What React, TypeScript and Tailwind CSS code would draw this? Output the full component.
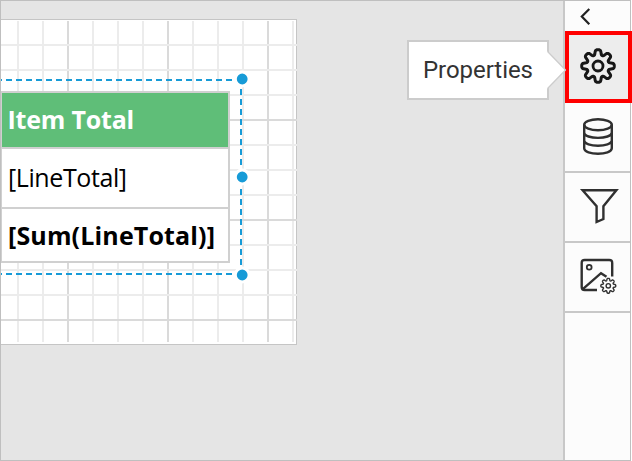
import type { ReactNode } from "react";

function gearPath(c: number, teeth: number, base: number, depth: number, sharp: number) {
  const points: string[] = [];
  const steps = teeth * 24;
  for (let i = 0; i < steps; i++) {
    const a = (i / steps) * Math.PI * 2;
    const wave = Math.tanh(sharp * (Math.cos(teeth * a) + 0.22));
    const r = base + depth * wave;
    points.push(`${(c + r * Math.sin(a)).toFixed(2)} ${(c - r * Math.cos(a)).toFixed(2)}`);
  }
  return `M${points.join("L")}Z`;
}

const verticals = Array.from({ length: 12 }, (_, i) => 16 + i * 25);
const horizontals = Array.from({ length: 12 }, (_, i) => 24 + i * 25);
const handles = [59, 157, 255];

function DesignSurface() {
  return (
    <svg className="absolute inset-0" width="296" height="324" fill="none">
      <g shapeRendering="crispEdges">
        {verticals.map((x, i) => (
          <rect key={x} x={x} y="1" width="2" height="321" fill={i % 4 === 2 ? "#dadada" : "#ececec"} />
        ))}
        {horizontals.map((y, i) => (
          <rect key={y} x="0" y={y} width="296" height="2" fill={i % 4 === 3 ? "#dadada" : "#ececec"} />
        ))}
      </g>
      <g stroke="#179bd7" strokeWidth="2" strokeDasharray="6 4">
        <path d="M-5 60H236" />
        <path d="M-5 254H236" />
        <path d="M240 69V252" />
      </g>
      {handles.map((y) => (
        <circle key={y} cx="241.2" cy={y} r="6.9" fill="#179bd7" stroke="white" strokeWidth="3" />
      ))}
    </svg>
  );
}

function Panel({ children }: { children: ReactNode }) {
  return (
    <button className="flex h-[70px] w-full items-center justify-center border-b-2 border-[#c8c8c8]">
      {children}
    </button>
  );
}

export default function App() {
  return (
    <div className="h-[461px] w-[632px] overflow-hidden bg-white">
      <main className="flex h-[461px] w-[631px] border border-[#bfbfbf] bg-[#e5e5e5]">
        <section className="flex grow items-start justify-between pt-[18px] pr-3.5">
          <div className="relative h-[326px] w-[296px] border-y border-r border-[#c5c5c5] bg-white pt-[71px]">
            <DesignSurface />
            <div className="relative flex w-[229px] flex-col border-y-2 border-r-2 border-l border-[#d0d0d0] bg-white font-['Open_Sans','Noto_Sans',sans-serif] text-[25px] whitespace-nowrap text-black">
              <div className="flex h-14 items-center border-b-2 border-[#d0d0d0] bg-[#5fbe78] pl-[5.5px] font-bold tracking-[-0.2px] text-white">
                Item Total
              </div>
              <div className="flex h-[60px] items-center border-b-2 border-[#d0d0d0] pl-1.5 tracking-[-0.4px]">
                [LineTotal]
              </div>
              <div className="flex h-[52px] items-center pt-0.5 pl-1.5 font-bold tracking-[0.15px]">
                [Sum(LineTotal)]
              </div>
            </div>
          </div>
          <div className="relative z-20 mt-[21px] flex h-[60px] w-[142px] items-center border-2 border-[#ccc] bg-white pl-3.5 font-[Roboto,sans-serif] text-2xl tracking-[-0.05px] text-[#333]">
            Properties
            <svg className="absolute top-1/2 left-full -translate-y-1/2" width="19" height="38">
              <path d="M0 0L18.5 19L0 38Z" fill="white" />
              <path d="M1 0V1L18.5 19L1 37V38" fill="none" stroke="#ccc" strokeWidth="1.3" />
            </svg>
          </div>
        </section>
        <aside className="flex w-[67px] shrink-0 flex-col border-l-2 border-[#c8c8c8] bg-[#fcfcfc]">
          <button className="flex h-[30px] w-full pt-[7px] pl-[15px]">
            <svg width="12" height="18" fill="none" stroke="#222" strokeWidth="2.2">
              <path d="M9.3 1L1.8 8.5L9.3 16.3" />
            </svg>
          </button>
          <div className="z-10 flex h-[72px] w-[67px] items-center justify-center border-4 border-[#ff0000] bg-[#ededed] pr-px pb-0.5">
            <svg width="38" height="38" fill="none" stroke="#171717" strokeWidth="3" strokeLinejoin="round">
              <path d={gearPath(19, 8, 13.6, 2.8, 1.6)} />
              <circle cx="19" cy="19" r="5" strokeWidth="2.8" />
            </svg>
          </div>
          <Panel>
            <svg width="32" height="38" fill="none" stroke="#303030" strokeWidth="2.4">
              <ellipse cx="16" cy="6.7" rx="13.8" ry="5.5" />
              <path d="M2.2 6.7V30.2C2.2 37.5 29.8 37.5 29.8 30.2V6.7M2.2 14.4C2.2 21.7 29.8 21.7 29.8 14.4M2.2 22.3C2.2 29.6 29.8 29.6 29.8 22.3" />
            </svg>
          </Panel>
          <Panel>
            <svg width="42" height="38" fill="none" stroke="#303030" strokeWidth="2.4">
              <path d="M5.6 2.2H39.4L26.4 18.2V31L19.6 34V18.2Z" />
            </svg>
          </Panel>
          <Panel>
            <svg width="40" height="38" fill="none" stroke="#303030" strokeWidth="2.4">
              <path d="M34.2 18.5V5Q34.2 2 31.2 2H6.7Q3.7 2 3.7 5V29Q3.7 32 6.7 32H19" />
              <path d="M4.5 31.3L23 15.2L28.5 18.8" />
              <circle cx="11.2" cy="9.2" r="2.4" strokeWidth="1.8" />
              <g transform="translate(21.3 18.8)" strokeWidth="1.4">
                <path d={gearPath(9, 8, 6.3, 1.2, 1.6)} />
                <circle cx="9" cy="9" r="2.2" />
              </g>
            </svg>
          </Panel>
        </aside>
      </main>
    </div>
  );
}
